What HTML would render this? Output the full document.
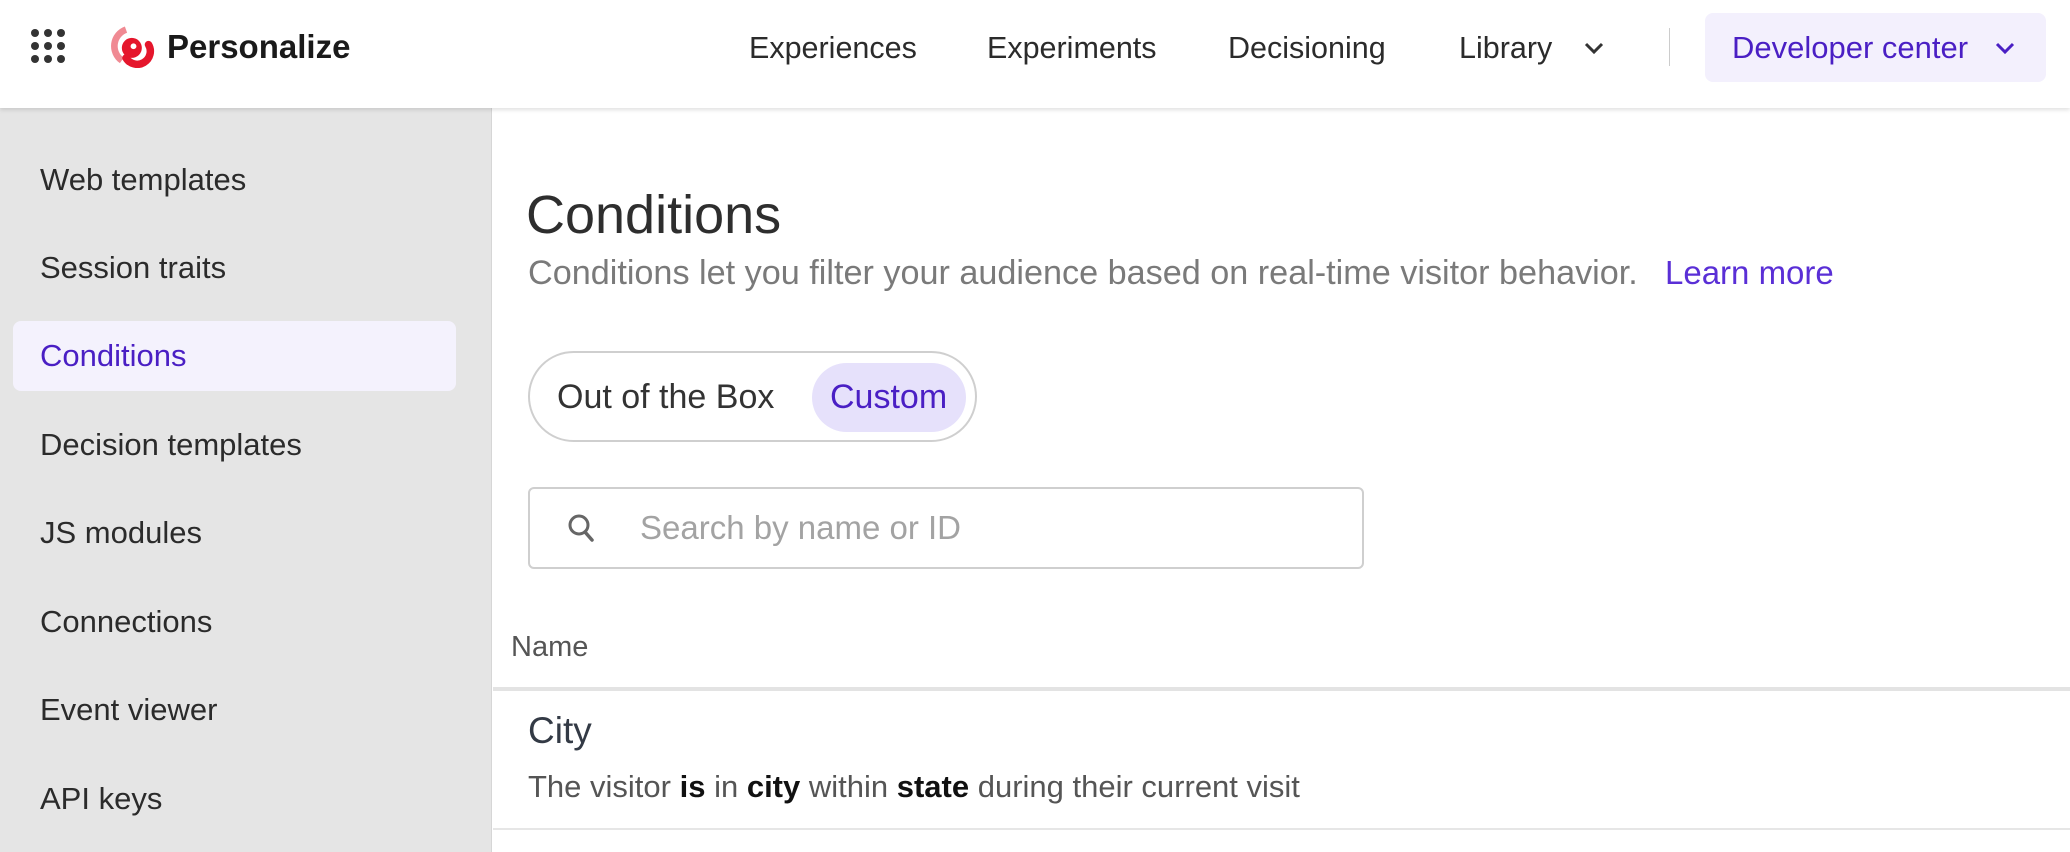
<!DOCTYPE html>
<html><head><style>
*{margin:0;padding:0;box-sizing:border-box}
body{width:2070px;height:852px;overflow:hidden;background:#fff;font-family:"Liberation Sans",sans-serif;color:#2b2b2b;position:relative}
.hdr{position:absolute;left:0;top:0;width:2070px;height:108px;background:#fff;box-shadow:0 2px 4px rgba(0,0,0,.12);z-index:2}
.abs{position:absolute;white-space:nowrap}
.nav{font-size:30.5px;color:#2b2b2b;top:30px;line-height:36px}
.side{position:absolute;left:0;top:108px;width:492px;height:744px;background:#e5e5e5;border-right:1px solid #d6d6d6}
.si{position:absolute;left:40px;font-size:31px;color:#2b2b2b;line-height:40px}
</style></head><body>
<div class="hdr">
<svg class="abs" style="left:29px;top:27px" width="40" height="40" viewBox="0 0 40 40" fill="#333">
<circle cx="6" cy="6" r="4"/><circle cx="19" cy="6" r="4"/><circle cx="32" cy="6" r="4"/>
<circle cx="6" cy="19" r="4"/><circle cx="19" cy="19" r="4"/><circle cx="32" cy="19" r="4"/>
<circle cx="6" cy="32" r="4"/><circle cx="19" cy="32" r="4"/><circle cx="32" cy="32" r="4"/></svg>
<svg class="abs" style="left:106px;top:22px" width="50" height="46" viewBox="0 0 60 55">
<path d="M24 9 A21 21 0 0 0 19 46" fill="none" stroke="#f08a93" stroke-width="8"/>
<circle cx="31" cy="31" r="12" fill="#e5162c"/>
<circle cx="33" cy="29" r="3.5" fill="#fff"/>
<path d="M24 43 A14 14 0 0 0 51 27" fill="none" stroke="#e5162c" stroke-width="9" stroke-linecap="round"/>
</svg>
<div class="abs" style="left:167px;top:28px;font-size:33px;font-weight:bold;color:#1a1a1a">Personalize</div>
<div class="abs nav" style="left:749px">Experiences</div>
<div class="abs nav" style="left:987px">Experiments</div>
<div class="abs nav" style="left:1228px">Decisioning</div>
<div class="abs nav" style="left:1459px">Library</div>
<svg class="abs" style="left:1583px;top:40px" width="22" height="16" viewBox="0 0 22 16"><path d="M3 4 L11 12 L19 4" fill="none" stroke="#333" stroke-width="3"/></svg>
<div class="abs" style="left:1669px;top:28px;width:1px;height:38px;background:#ccc"></div>
<div class="abs" style="left:1705px;top:13px;width:341px;height:69px;background:#f3f0fd;border-radius:8px"></div>
<div class="abs nav" style="left:1732px;color:#4a1fc4;font-size:31px">Developer center</div>
<svg class="abs" style="left:1994px;top:40px" width="22" height="16" viewBox="0 0 22 16"><path d="M3 4 L11 12 L19 4" fill="none" stroke="#4a1fc4" stroke-width="3"/></svg>
</div>
<div class="side">
<div class="si" style="top:52px">Web templates</div>
<div class="si" style="top:140px">Session traits</div>
<div class="abs" style="left:13px;top:213px;width:443px;height:70px;background:#f4f2fd;border-radius:8px"></div>
<div class="si" style="top:228px;color:#4a1fc4">Conditions</div>
<div class="si" style="top:317px">Decision templates</div>
<div class="si" style="top:405px">JS modules</div>
<div class="si" style="top:494px">Connections</div>
<div class="si" style="top:582px">Event viewer</div>
<div class="si" style="top:671px">API keys</div>
</div>
<div class="abs" style="left:526px;top:182px;font-size:54px;line-height:66px;color:#2e2e2e">Conditions</div>
<div class="abs" style="left:528px;top:253px;font-size:34.2px;line-height:40px;color:#7a7a7a">Conditions let you filter your audience based on real-time visitor behavior.</div>
<div class="abs" style="left:1665px;top:253px;font-size:33px;line-height:40px;color:#5a2fd6">Learn more</div>
<div class="abs" style="left:528px;top:351px;width:449px;height:91px;border:2px solid #cfcfcf;border-radius:46px"></div>
<div class="abs" style="left:812px;top:363px;width:154px;height:69px;background:#e6e1fb;border-radius:35px"></div>
<div class="abs" style="left:557px;top:377px;font-size:34px;line-height:40px;color:#333">Out of the Box</div>
<div class="abs" style="left:830px;top:377px;font-size:34px;line-height:40px;color:#4a1fc4">Custom</div>
<div class="abs" style="left:528px;top:487px;width:836px;height:82px;border:2px solid #cfcfcf;border-radius:6px"></div>
<svg class="abs" style="left:566px;top:512px" width="32" height="34" viewBox="0 0 32 34"><circle cx="13" cy="13" r="9" fill="none" stroke="#666" stroke-width="3"/><path d="M19 20 L26 28" stroke="#666" stroke-width="3.5" stroke-linecap="round"/></svg>
<div class="abs" style="left:640px;top:508px;font-size:33px;line-height:40px;color:#a3a3a3">Search by name or ID</div>
<div class="abs" style="left:511px;top:629px;font-size:29px;line-height:36px;color:#555">Name</div>
<div class="abs" style="left:493px;top:687px;width:1577px;height:4px;background:#e3e3e3"></div>
<div class="abs" style="left:528px;top:709px;font-size:37px;line-height:44px;color:#333a45">City</div>
<div class="abs" style="left:528px;top:768px;font-size:31px;line-height:38px;color:#555">The visitor <b style="color:#111">is</b> in <b style="color:#111">city</b> within <b style="color:#111">state</b> during their current visit</div>
<div class="abs" style="left:493px;top:828px;width:1577px;height:2px;background:#e6e6e6"></div>
</body></html>
